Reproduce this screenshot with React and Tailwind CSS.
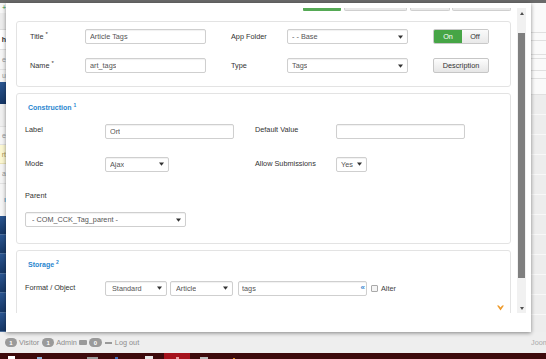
import React from 'react';

const font = "font-['Liberation_Sans',Arial,sans-serif]";

// tiny caret used in every select
const Caret = () => (
  <svg width="5" height="4" viewBox="0 0 5 4" className="shrink-0">
    <path d="M0 0.5 L5 0.5 L2.5 3.8 Z" fill="#333" />
  </svg>
);

const Input = ({ value, className = '', children }) => (
  <div
    className={`flex items-center justify-between rounded-[2px] border border-[#cfcfcf] bg-white px-[4px] text-[#555] shadow-[inset_0_1px_1px_rgba(0,0,0,0.06)] ${className}`}
  >
    <span className="truncate leading-[11px]">{value}</span>
    {children}
  </div>
);

const Select = ({ value, className = '' }) => (
  <Input value={value} className={className}>
    <Caret />
  </Input>
);

const Panel = ({ className = '', children }) => (
  <div className={`rounded-[3px] border border-[#e3e3e3] bg-white ${className}`}>{children}</div>
);

const Legend = ({ title, num }) => (
  <div className="flex h-[10px] items-center pl-[3px] text-[7px] font-bold text-[#2a86cf]">
    {title}
    <sup className="ml-[2px] text-[5px]">{num}</sup>
  </div>
);

// background page strips that peek out behind the modal
const leftBlocks = [
  ['h-[10px] bg-[#f7f7f7]', '+', 'text-[#3a9a3a]'],
  ['h-[17px] bg-[#ececec] border-b border-[#dcdcdc]', '', ''],
  ['h-[20px] bg-white border-b border-[#e2e2e2]', 'h', 'text-[#333] font-bold'],
  ['h-[20px] bg-[#f5f5f5] border-b border-[#e2e2e2]', 'e', 'text-[#999]'],
  ['h-[12px] bg-[#f5f5f5]', 'u', 'text-[#999]'],
  ['h-[23px] bg-gradient-to-b from-[#2b5691] to-[#163766]', '', ''],
  ['h-[23px] bg-[#f0f0f0] border-b border-[#e2e2e2]', '', ''],
  ['h-[18px] bg-[#f5f5f5] border-b border-[#e2e2e2]', 'e', 'text-[#999]'],
  ['h-[19px] bg-[#fbf7d2] border-b border-[#e9e2b5]', 'rt', 'text-[#b09a55]'],
  ['h-[20px] bg-[#f5f5f5] border-b border-[#e2e2e2]', 'a', 'text-[#999]'],
  ['h-[32px] bg-[#f5f5f5]', 'ı', 'text-[#2a6fb0]'],
];

const rightLines = [30, 8, 14, 4, 12, 8, 16];

export default function App() {
  return (
    <div className={`relative h-[359px] w-[546px] overflow-hidden bg-[#f0f0f0] text-[7.3px] leading-none text-[#333] ${font}`}>
      {/* page behind */}
      <div className="flex h-full flex-col">
        <div className="h-[3px] bg-[#6a6a6a]" />
        <div className="flex h-[329px]">
          <div className="flex w-[6px] flex-col overflow-hidden">
            {leftBlocks.map(([cls, t, tc], i) => (
              <div key={i} className={`flex items-center justify-end overflow-hidden text-[7px] ${cls} ${tc}`}>
                {t}
              </div>
            ))}
            {[0, 1, 2, 3, 4, 5].map((i) => (
              <div key={i} className="h-[19.5px] border-b border-[#4d6f9c] bg-gradient-to-b from-[#2b5691] to-[#163766]" />
            ))}
          </div>
          <div className="flex-1" />
          <div className="flex w-[15px] flex-col bg-[#fafafa]">
            {rightLines.map((h, i) => (
              <div key={i} style={{ height: h }} className="border-b border-[#e0e0e0]" />
            ))}
            <div className="flex flex-1 flex-col bg-[#ededed]">
              {[0, 1, 2, 3, 4, 5, 6, 7, 8, 9, 10].map((i) => (
                <div key={i} className="h-[20px] border-b border-[#f8f8f8]" />
              ))}
            </div>
          </div>
        </div>
        <div className="flex h-[21px] items-center justify-between bg-[#eeeeee] pl-[5px] text-[#8d8d8d]">
          <div className="flex items-center">
            <span className="flex h-[9px] w-[12px] items-center justify-center rounded-full bg-[#9a9a9a] text-[6px] font-bold text-white">1</span>
            <span className="ml-[2px]">Visitor</span>
            <span className="ml-[3px] flex h-[9px] w-[12px] items-center justify-center rounded-full bg-[#9a9a9a] text-[6px] font-bold text-white">1</span>
            <span className="ml-[2px]">Admin</span>
            <span className="ml-[2px] h-[5px] w-[8px] rounded-[1px] bg-[#9a9a9a]" />
            <span className="ml-[2px] flex h-[9px] w-[13px] items-center justify-center rounded-full bg-[#9a9a9a] text-[6px] font-bold text-white">0</span>
            <span className="ml-[3px] h-[2px] w-[7px] bg-[#9a9a9a]" />
            <span className="ml-[3px]">Log out</span>
          </div>
          <span className="w-[15px] overflow-hidden whitespace-nowrap text-[#aaa]">Joom</span>
        </div>
        <div className="relative flex h-[6px] items-end bg-[#3d0a0c]">
          <div className="ml-[8px] h-[3px] w-[7px] bg-white" />
          <div className="ml-[22px] h-[2px] w-[5px] bg-[#8fb3d9]" />
          <div className="ml-[45px] h-[2px] w-[11px] bg-[#9a9a9a]" />
          <div className="ml-[17px] h-[2px] w-[3px] bg-[#3f6fc0]" />
          <div className="ml-[27px] h-[3px] w-[8px] bg-[#e6e6e6]" />
          <div className="ml-[11px] flex h-[6px] w-[26px] items-end justify-center bg-[#a5121c]">
            <div className="h-[2px] w-[3px] bg-[#e9a0a0]" />
          </div>
          <div className="ml-[10px] h-[2px] w-[8px] bg-[#bbbbbb]" />
          <div className="ml-[25px] h-[1px] w-[2px] bg-[#e08a20]" />
        </div>
      </div>

      {/* modal */}
      <div className="absolute left-[6px] top-[3px] flex h-[329px] w-[525px] flex-col bg-white pl-[10px] pr-[5px] pt-[5px] shadow-[0_1px_4px_rgba(0,0,0,0.45)]">
        <div className="flex h-[305px]">
          <div className="flex w-[495px] flex-col overflow-hidden">
            {/* tab underlines */}
            <div className="flex h-[3px] justify-end">
              <div className="h-[2.5px] w-[38px] rounded-b-[1px] bg-[#55a955]" />
              <div className="ml-[3px] h-[3px] w-[63px] rounded-b-[2px] border border-t-0 border-[#cfcfcf] bg-[#e8e8e8]" />
              <div className="ml-[3px] h-[3px] w-[40px] rounded-b-[2px] border border-t-0 border-[#cfcfcf] bg-[#e8e8e8]" />
              <div className="ml-[2px] h-[3px] w-[59px] rounded-b-[2px] border border-t-0 border-[#cfcfcf] bg-[#e8e8e8]" />
            </div>

            {/* general */}
            <Panel className="mt-[9.7px] pb-[13px] pl-[13px] pt-[7.5px]">
              <div className="grid grid-cols-[55px_146px_56px_146px_56px] gap-y-[14px]">
                <div className="flex h-[15px] items-center">
                  Title <sup className="ml-[2px] text-[6px]">*</sup>
                </div>
                <Input value="Article Tags" className="h-[15px] w-[121px]" />
                <div className="flex h-[15px] items-center">App Folder</div>
                <Select value="- - Base" className="h-[15px] w-[121px]" />
                <div className="flex h-[15px] overflow-hidden rounded-[2px] border border-[#c9c9c9]">
                  <div className="flex w-[28px] items-center justify-center bg-[#46a546] text-white">On</div>
                  <div className="flex flex-1 items-center justify-center bg-gradient-to-b from-[#fafafa] to-[#e9e9e9] text-[#333]">
                    Off
                  </div>
                </div>
                <div className="flex h-[15px] items-center">
                  Name <sup className="ml-[2px] text-[6px]">*</sup>
                </div>
                <Input value="art_tags" className="h-[15px] w-[121px]" />
                <div className="flex h-[15px] items-center">Type</div>
                <Select value="Tags" className="h-[15px] w-[121px]" />
                <div className="flex h-[15px] items-center justify-center rounded-[2px] border border-[#c6c6c6] bg-gradient-to-b from-[#fdfdfd] to-[#e6e6e6] text-[#333]">
                  Description
                </div>
              </div>
            </Panel>

            {/* construction */}
            <Panel className="mt-[5.7px] pb-[15.7px] pl-[8px] pt-[8.3px]">
              <Legend title="Construction" num="1" />
              <div className="mt-[12px] grid grid-cols-[80px_150px_81px_auto] items-center">
                <div className="pb-[3px]">Label</div>
                <Input value="Ort" className="h-[14.7px] w-[129px]" />
                <div className="pb-[3px]">Default Value</div>
                <Input value="" className="h-[14.7px] w-[129px]" />
              </div>
              <div className="mt-[18.3px] grid grid-cols-[80px_150px_81px_auto] items-center">
                <div className="pb-[1px]">Mode</div>
                <Select value="Ajax" className="h-[14.4px] w-[64px]" />
                <div className="pb-[1px]">Allow Submissions</div>
                <Select value="Yes" className="h-[14.4px] w-[31px]" />
              </div>
              <div className="mt-[19.3px] flex h-[10px] items-center">Parent</div>
              <Select value="- COM_CCK_Tag_parent -" className="mt-[11.3px] h-[15px] w-[161px] pl-[6px]" />
            </Panel>

            {/* storage */}
            <Panel className="mt-[6px] h-[90px] shrink-0 pl-[8px] pr-[5px] pt-[8.3px]">
              <Legend title="Storage" num="2" />
              <div className="mt-[11.7px] flex items-center">
                <div className="w-[80px] pb-[1px]">Format / Object</div>
                <Select value="Standard" className="h-[14.7px] w-[62px] pl-[6px]" />
                <Select value="Article" className="ml-[3px] h-[14.7px] w-[63px] pl-[5px]" />
                <Input value="tags" className="ml-[5px] h-[14.7px] w-[129px] pl-[3px] pr-[1px]">
                  <span className="text-[8px] font-bold text-[#3b88cf]">«</span>
                </Input>
                <span className="ml-[4px] h-[7px] w-[7px] rounded-[1px] border border-[#a9a9a9] bg-[#f4f4f4]" />
                <span className="ml-[3px] text-[#444]">Alter</span>
              </div>
              <div className="mt-[9px] flex justify-end pr-[1px]">
                <svg width="7" height="6" viewBox="0 0 7 6">
                  <path d="M0 0.5 L1.8 0.5 L3.5 2.6 L5.2 0.5 L7 0.5 L3.5 5.5 Z" fill="#ee9a2a" />
                </svg>
              </div>
            </Panel>
          </div>

          {/* scrollbar */}
          <div className="ml-[6px] flex w-[9px] flex-col bg-[#f1f1f1]">
            <div className="flex h-[10px] items-center justify-center">
              <svg width="4" height="3" viewBox="0 0 4 3">
                <path d="M0 3 L4 3 L2 0 Z" fill="#505050" />
              </svg>
            </div>
            <div className="mx-[1px] mt-[15px] h-[245px] bg-[#7f7f7f]" />
            <div className="flex-1" />
            <div className="flex h-[10px] items-center justify-center">
              <svg width="4" height="3" viewBox="0 0 4 3">
                <path d="M0 0 L4 0 L2 3 Z" fill="#505050" />
              </svg>
            </div>
          </div>
        </div>
      </div>
    </div>
  );
}
